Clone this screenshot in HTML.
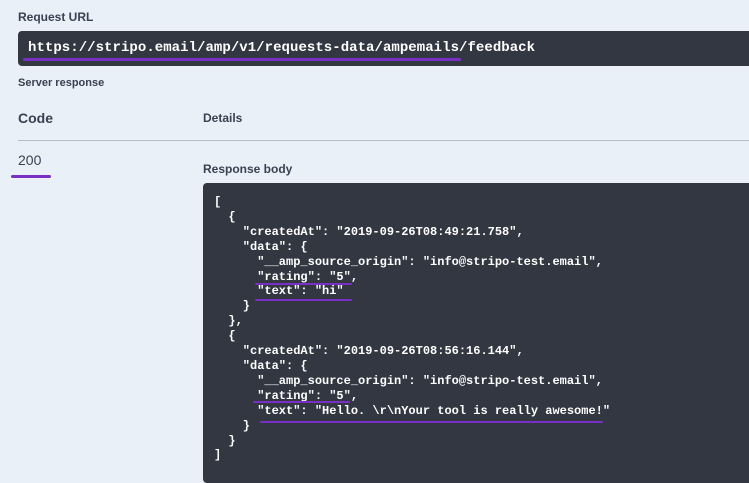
<!DOCTYPE html>
<html><head><meta charset="utf-8"><style>
body{margin:0;width:749px;height:469px;overflow:hidden;background:#e9f0f8;font-family:"Liberation Sans",sans-serif;color:#3b4151;position:relative}
.a{position:absolute;white-space:pre}
.b{font-weight:bold}
.dark{position:absolute;background:#333741;border-radius:4px}
.u{position:absolute;height:3px;background:#7a2fc4;border-radius:2px}
pre{margin:0;font-family:"Liberation Mono",monospace;font-weight:bold;font-size:12px;line-height:14.9px;color:#fff}
</style></head><body>
<div class="a b" style="left:18px;top:10px;font-size:12px">Request URL</div>
<div class="dark" style="left:18px;top:31px;width:760px;height:35px"></div>
<div class="a b" style="left:28px;top:40px;font-family:'Liberation Mono',monospace;font-size:14px;color:#fff;letter-spacing:0.05px">https://stripo.email/amp/v1/requests-data/ampemails/feedback</div>
<div class="u" style="left:23px;top:58px;width:438px"></div>
<div class="a b" style="left:18px;top:77px;font-size:11px">Server response</div>
<div class="a b" style="left:18px;top:110px;font-size:14px">Code</div>
<div class="a b" style="left:203px;top:111px;font-size:12px">Details</div>
<div style="position:absolute;left:18px;top:140px;width:740px;height:1px;background:#b8bec8"></div>
<div class="a" style="left:18px;top:152px;font-size:14px">200</div>
<div class="u" style="left:11px;top:175px;width:40px"></div>
<div class="a b" style="left:203px;top:162px;font-size:12px">Response body</div>
<div class="dark" style="left:203px;top:183px;width:560px;height:300px"></div>
<pre class="a" style="left:214px;top:195px">[
  {
    "createdAt": "2019-09-26T08:49:21.758",
    "data": {
      "__amp_source_origin": "info@stripo-test.email",
      "rating": "5",
      "text": "hi"
    }
  },
  {
    "createdAt": "2019-09-26T08:56:16.144",
    "data": {
      "__amp_source_origin": "info@stripo-test.email",
      "rating": "5",
      "text": "Hello. \r\nYour tool is really awesome!"
    }
  }
]</pre>
<div class="u" style="left:255px;top:283px;width:97px;height:2px"></div>
<div class="u" style="left:255px;top:299px;width:97px;height:2px"></div>
<div class="u" style="left:253px;top:401px;width:97px;height:2px"></div>
<div class="u" style="left:260px;top:421px;width:343px;height:2px"></div>
</body></html>
